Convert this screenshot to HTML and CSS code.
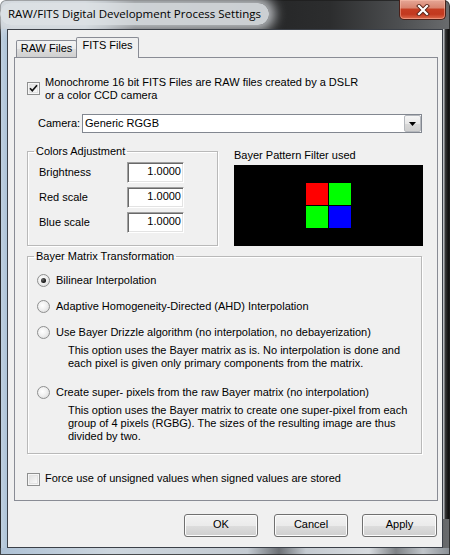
FILE: index.html
```html
<!DOCTYPE html>
<html>
<head>
<meta charset="utf-8">
<title>RAW/FITS Digital Development Process Settings</title>
<link rel="stylesheet" href="styles.css">
</head>
<body>
<div class="window">
  <div class="titlebar">
    <span class="title">RAW/FITS Digital Development Process Settings</span>
    <div class="close">
      <svg width="14" height="12" viewBox="0 0 14 12">
        <path d="M3 2 L11 10 M11 2 L3 10" stroke="#5a2418" stroke-width="4" stroke-linecap="square" fill="none"/>
        <path d="M3 2 L11 10 M11 2 L3 10" stroke="#ffffff" stroke-width="2.2" stroke-linecap="square" fill="none"/>
      </svg>
    </div>
  </div>
  <div class="client">
    <div class="tabs">
      <div class="tab raw">RAW Files</div>
      <div class="tab active">FITS Files</div>
    </div>
    <div class="panel">
      <div class="check-row mono">
        <span class="checkbox">
          <svg width="11" height="11" viewBox="0 0 11 11"><path d="M2 5.2 L4.3 7.8 L9 2.3" stroke="#111" stroke-width="1.7" fill="none"/></svg>
        </span>
        <span class="check-label">Monochrome 16 bit FITS Files are RAW files created by a DSLR<br>or a color CCD camera</span>
      </div>
      <div class="camera-row">
        <span class="camera-label">Camera:</span>
        <div class="combo">
          <span class="combo-text">Generic RGGB</span>
          <span class="combo-btn"><svg width="7" height="4" viewBox="0 0 7 4"><path d="M0 0 H7 L3.5 4 Z" fill="#000"/></svg></span>
        </div>
      </div>
      <div class="middle">
        <fieldset class="group colors">
          <legend>Colors Adjustment</legend>
          <div class="group-body">
            <div class="field-row"><span class="field-label">Brightness</span><span class="edit">1.0000</span></div>
            <div class="field-row"><span class="field-label">Red scale</span><span class="edit">1.0000</span></div>
            <div class="field-row"><span class="field-label">Blue scale</span><span class="edit">1.0000</span></div>
          </div>
        </fieldset>
        <div class="bayer">
          <div class="bayer-label">Bayer Pattern Filter used</div>
          <div class="bayer-box">
            <div class="bayer-grid">
              <span class="cell red"></span><span class="cell green"></span>
              <span class="cell green"></span><span class="cell blue"></span>
            </div>
          </div>
        </div>
      </div>
      <fieldset class="group matrix">
        <legend>Bayer Matrix Transformation</legend>
        <div class="group-body">
          <div class="radio-row first"><span class="radio on"></span><span>Bilinear Interpolation</span></div>
          <div class="radio-row"><span class="radio"></span><span>Adaptive Homogeneity-Directed (AHD) Interpolation</span></div>
          <div class="radio-row"><span class="radio"></span><span>Use Bayer Drizzle algorithm (no interpolation, no debayerization)</span></div>
          <div class="desc">This option uses the Bayer matrix as is. No interpolation is done and<br>each pixel is given only primary components from the matrix.</div>
          <div class="radio-row"><span class="radio"></span><span>Create super- pixels from the raw Bayer matrix (no interpolation)</span></div>
          <div class="desc">This option uses the Bayer matrix to create one super-pixel from each<br>group of 4 pixels (RGBG). The sizes of the resulting image are thus<br>divided by two.</div>
        </div>
      </fieldset>
      <div class="check-row force">
        <span class="checkbox"></span>
        <span class="check-label">Force use of unsigned values when signed values are stored</span>
      </div>
    </div>
    <div class="buttons">
      <button class="btn ok">OK</button>
      <button class="btn cancel">Cancel</button>
      <button class="btn apply">Apply</button>
    </div>
  </div>
</div>
</body>
</html>
```

FILE: styles.css
```css
* { box-sizing: border-box; }
html, body { margin: 0; padding: 0; background: #ffffff; }
body {
  font-family: "Liberation Sans", Arial, sans-serif;
  font-size: 11px;
  line-height: 13px;
  color: #000;
}

.window {
  width: 450px;
  height: 555px;
  border-radius: 6px 6px 0 0;
  overflow: hidden;
  display: flex;
  flex-direction: column;
  background:
    linear-gradient(90deg, #4d5258 0 1px, #c0d0df 1px, #aec4d8 100%) 0 29px / 7px 519px no-repeat,
    linear-gradient(90deg, #b8bcc0 0 1px, #3a3b3c 2px, #151515 5px, #0c0c0c 100%) 443px 29px / 7px 490px no-repeat,
    linear-gradient(90deg, #aec2d6 0, #cdd6de 25%, #c4cbd2 55%, #6c7075 62%, #c5cbd1 68%, #d7dbdf 82%, #7e8286 88%, #c0c5ca 94%, #8a9096 100%) 0 548px / 100% 7px no-repeat,
    linear-gradient(90deg, #c3cbd3 0, #c6cdd4 85px, #9aa1a8 105px, #3b3d40 135px, #242526 250px, #2c2d2e 330px, #4d4f51 400px, #6a6c6e 450px);
  box-shadow: inset 0 0 0 1px rgba(30, 30, 30, 0.75);
}

/* title bar */
.titlebar {
  height: 29px;
  display: flex;
  align-items: flex-start;
  flex: none;
}
.title {
  margin-top: 3px;
  padding: 3px 8px 4px 8px;
  font-family: "Open Sans", "Noto Sans", sans-serif;
  font-size: 11.5px;
  line-height: 15px;
  color: #000;
  background: rgba(222, 226, 230, 0.9);
  border-radius: 11px;
  box-shadow: 0 0 12px 6px rgba(222, 226, 230, 0.8);
  white-space: nowrap;
}
.close {
  margin-left: auto;
  margin-right: 4px;
  width: 47px;
  height: 20px;
  border: 1px solid #4a2019;
  border-top: none;
  border-radius: 0 0 5px 5px;
  background: linear-gradient(180deg, #e5a696 0%, #d98570 40%, #c53d22 50%, #c2391f 75%, #dc6a4c 100%);
  box-shadow: inset 0 0 0 1px rgba(255, 200, 180, 0.45);
  display: flex;
  align-items: center;
  justify-content: center;
}

/* client area */
.client {
  margin: 0 7px;
  height: 519px;
  flex: none;
  border: 1px solid #3b4048;
  background: #f0f0f0;
}

.tabs {
  display: flex;
  align-items: flex-end;
  padding: 7px 0 0 8px;
  height: 28px;
}
.tab {
  position: relative;
  border: 1px solid #898c95;
  border-bottom: none;
  border-radius: 2px 2px 0 0;
  text-align: center;
  white-space: nowrap;
}
.tab.raw {
  width: 61px;
  height: 17px;
  margin-bottom: 1px;
  padding-top: 1px;
  background: linear-gradient(180deg, #f3f3f3 0%, #ebebeb 50%, #dddddd 51%, #cfcfcf 100%);
}
.tab.active {
  width: 63px;
  height: 21px;
  margin-left: -1px;
  padding-top: 1px;
  background: #f0f0f0;
  z-index: 1;
}

.panel {
  margin: -1px 0 0 6px;
  width: 424px;
  height: 444px;
  border: 1px solid #898c95;
  background: #f0f0f0;
  padding: 18px 0 0 0;
}

.check-row {
  display: flex;
  align-items: flex-start;
  padding-left: 12px;
}
.checkbox {
  width: 13px;
  height: 13px;
  flex: none;
  border: 1px solid #8e8f8f;
  background: linear-gradient(135deg, #dcdcdc, #ffffff);
  box-shadow: inset 0 0 0 1px #f6f6f6, inset 0 0 0 2px #e2e2e2;
  display: flex;
  align-items: center;
  justify-content: center;
  margin-right: 5px;
}
.mono .checkbox { margin-top: 6px; }
.force { margin-top: 18px; }
.force .checkbox { margin-top: 1px; }

.camera-row {
  display: flex;
  align-items: center;
  padding-left: 23px;
  margin-top: 12px;
}
.camera-label { width: 44px; }
.combo {
  width: 340px;
  height: 19px;
  border: 1px solid #828790;
  background: #fff;
  display: flex;
  align-items: center;
  padding-left: 2px;
}
.combo-text { flex: 1; }
.combo-btn {
  width: 17px;
  height: 17px;
  border: 1px solid #b5b8bd;
  border-radius: 2px;
  background: linear-gradient(180deg, #f6f6f6 0%, #e8e8e8 50%, #dadada 51%, #cfcfcf 100%);
  display: flex;
  align-items: center;
  justify-content: center;
}

.middle {
  display: flex;
  align-items: flex-start;
  padding-left: 12px;
  margin-top: 12px;
}

.group {
  padding: 0;
  min-inline-size: 0;
  border: 1px solid #b9b9b9;
  box-shadow: 1px 1px 0 #ffffff, inset 1px 1px 0 #ffffff;
}
.group legend {
  margin-left: 6px;
  padding: 0 2px;
  line-height: 13px;
}
.colors {
  margin: 0;
  width: 191px;
  height: 101px;
}
.colors .group-body {
  padding: 4px 0 0 11px;
  display: flex;
  flex-direction: column;
  gap: 4px;
}
.field-row {
  display: flex;
  align-items: center;
  height: 21px;
}
.field-label { width: 88px; }
.edit {
  width: 57px;
  height: 21px;
  border: 1px solid;
  border-color: #a0a0a0 #ffffff #ffffff #a0a0a0;
  box-shadow: inset 1px 1px 0 #696969, inset -1px -1px 0 #e3e3e3;
  background: #fff;
  text-align: right;
  padding: 2px 2px 0 0;
  align-self: stretch;
}

.bayer {
  margin-left: 16px;
  width: 189px;
  padding-top: 4px;
}
.bayer-box {
  margin-top: 3px;
  height: 81px;
  background: #000;
  display: flex;
  align-items: center;
  justify-content: center;
}
.bayer-grid {
  display: grid;
  grid-template-columns: 22px 22px;
  grid-template-rows: 22px 22px;
  gap: 1px;
}
.cell.red { background: #ff0000; }
.cell.green { background: #00ff00; }
.cell.blue { background: #0000ff; }

.matrix {
  margin: 4px 0 0 12px;
  width: 395px;
  height: 204px;
}
.matrix .group-body {
  padding: 11px 0 0 9px;
}
.radio-row {
  display: flex;
  align-items: center;
  margin-top: 13px;
}
.radio-row.first { margin-top: 0; }
.radio {
  width: 13px;
  height: 13px;
  flex: none;
  border-radius: 50%;
  border: 1px solid #8e8f8f;
  background: radial-gradient(circle at 40% 40%, #ffffff 0, #f0f0f0 45%, #d4d4d4 100%);
  margin-right: 6px;
  display: flex;
  align-items: center;
  justify-content: center;
}
.radio.on::after {
  content: "";
  width: 5px;
  height: 5px;
  border-radius: 50%;
  background: radial-gradient(circle at 35% 35%, #6a6a6a 0, #111 70%);
}
.desc {
  margin: 5px 0 0 31px;
  line-height: 13px;
}
.radio-row + .desc + .radio-row { margin-top: 16px; }

.buttons {
  display: flex;
  justify-content: flex-end;
  padding-right: 5px;
  margin-top: 13px;
}
.btn {
  height: 23px;
  width: 74px;
  font-family: "Liberation Sans", Arial, sans-serif;
  font-size: 11px;
  line-height: 13px;
  color: #000;
  border: 1px solid #707070;
  border-radius: 3px;
  background: linear-gradient(180deg, #f2f2f2 0%, #ebebeb 50%, #dddddd 51%, #cfcfcf 100%);
  box-shadow: inset 0 0 0 1px #fcfcfc;
  padding: 0 0 2px 0;
}
.btn.cancel { margin-left: 16px; }
.btn.apply { margin-left: 14px; width: 75px; }
```
